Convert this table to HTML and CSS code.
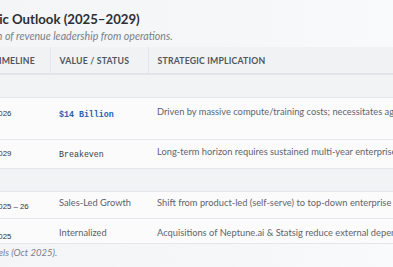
FILE: index.html
```html
<!DOCTYPE html>
<html lang="en">
<head>
<meta charset="utf-8">
<title>Strategic Outlook</title>
<link rel="stylesheet" href="styles.css">
</head>
<body>
<main class="report">
  <h1 class="title">5. Strategic Outlook (2025–2029)</h1>
  <p class="subtitle">Its separation of revenue leadership from operations.</p>
  <table class="grid">
    <colgroup>
      <col class="c-metric">
      <col class="c-time">
      <col class="c-value">
      <col class="c-impl">
    </colgroup>
    <thead>
      <tr class="head">
        <th>Item</th>
        <th>Timeline</th>
        <th>Value / Status</th>
        <th>Strategic Implication</th>
      </tr>
    </thead>
    <tbody>
      <tr class="group"><td class="lbl">P&amp;L</td><td colspan="3"></td></tr>
      <tr class="row r1">
        <td class="metric">Cash Burn</td>
        <td class="time">2026</td>
        <td class="value"><span class="mono money">$14 Billion</span></td>
        <td class="impl">Driven by massive compute/training costs; necessitates aggressive revenue expansion.</td>
      </tr>
      <tr class="row r2">
        <td class="metric">Profit</td>
        <td class="time">2029</td>
        <td class="value"><span class="mono">Breakeven</span></td>
        <td class="impl">Long-term horizon requires sustained multi-year enterprise contract growth.</td>
      </tr>
      <tr class="group"><td class="lbl">GTM</td><td colspan="3"></td></tr>
      <tr class="row r3">
        <td class="metric">Sales</td>
        <td class="time">2025 – 26</td>
        <td class="value">Sales-Led Growth</td>
        <td class="impl">Shift from product-led (self-serve) to top-down enterprise sales motions.</td>
      </tr>
      <tr class="row r4">
        <td class="metric">Infra</td>
        <td class="time">2025</td>
        <td class="value">Internalized</td>
        <td class="impl">Acquisitions of Neptune.ai &amp; Statsig reduce external dependencies.</td>
      </tr>
    </tbody>
  </table>
  <p class="footnote">Source — models (Oct 2025).</p>
</main>
</body>
</html>
```
FILE: styles.css
```css
* { box-sizing: border-box; }
html, body {
  margin: 0;
  padding: 0;
  background: linear-gradient(90deg, #f4f5f7 0%, #f6f7f9 60%, #f9fafb 100%);
  overflow: hidden;
}
body {
  font-family: Lato, "Open Sans", sans-serif;
  color: #4a4f57;
}
.report {
  margin-left: -57px;
  width: 760px;
  padding-top: 10px;
}
.title {
  margin: 0;
  font-family: Lato, sans-serif;
  font-size: 13.2px;
  line-height: 18px;
  font-weight: 700;
  color: #2c2f34;
}
.subtitle {
  margin: 1px 0 0;
  font-size: 10.6px;
  line-height: 14px;
  font-style: italic;
  color: #7b8088;
}
.grid {
  margin-top: 4px;
  width: 760px;
  table-layout: fixed;
  border-collapse: collapse;
}
.c-metric { width: 41px; }
.c-time { width: 66px; }
.c-value { width: 98px; }
.c-impl { width: 555px; }
.head th {
  height: 27px;
  padding: 0 9px;
  text-align: left;
  font-family: Lato, sans-serif;
  font-size: 8.7px;
  font-weight: 700;
  letter-spacing: 0.2px;
  text-transform: uppercase;
  color: #50555c;
  background: #f1f2f4;
  border-left: 1px solid #e4e6e9;
  border-bottom: 2px solid #e1e4e8;
  white-space: nowrap;
  overflow: hidden;
}
.head th:first-child { border-left: 0; }
.group td {
  height: 23px;
  background: #f1f3f5;
  border-bottom: 1px solid #e3e6ea;
}
.group .lbl {
  overflow: hidden;
  white-space: nowrap;
  font-size: 9px;
  color: transparent;
}
.row td {
  vertical-align: top;
  padding: 8px 9px 0;
  font-size: 9.3px;
  line-height: 12px;
  background: #fbfbfc;
  border-bottom: 1px solid #e3e6ea;
  white-space: nowrap;
  overflow: hidden;
}
.r1 td { height: 42px; }
.r2 td { height: 29px; padding-top: 6px; }
.r3 td { height: 27px; padding-top: 5px; }
.r4 td { height: 24px; padding-top: 8px; }
.row .metric { font-size: 9px; white-space: normal; }
.row .time {
  font-family: "Liberation Sans", Arial, sans-serif;
  font-size: 7.8px;
  color: #2f3237;
  padding-top: 10px;
  padding-left: 10px;
}
.r2 .time { padding-top: 8px; }
.r3 .time { padding-top: 9px; }
.r4 .time { padding-top: 12px; }
.row .value { color: #5d626a; }
.mono {
  font-family: "Liberation Mono", "Courier New", monospace;
  font-size: 8.3px;
  color: #3a3d42;
  display: inline-block;
  padding-top: 3px;
}
.money {
  font-weight: 700;
  color: #2d5fb0;
}
.row .impl { color: #5f646c; }
.footnote {
  margin: 3px 0 0;
  font-size: 9.5px;
  font-style: italic;
  color: #7b8088;
}
```
